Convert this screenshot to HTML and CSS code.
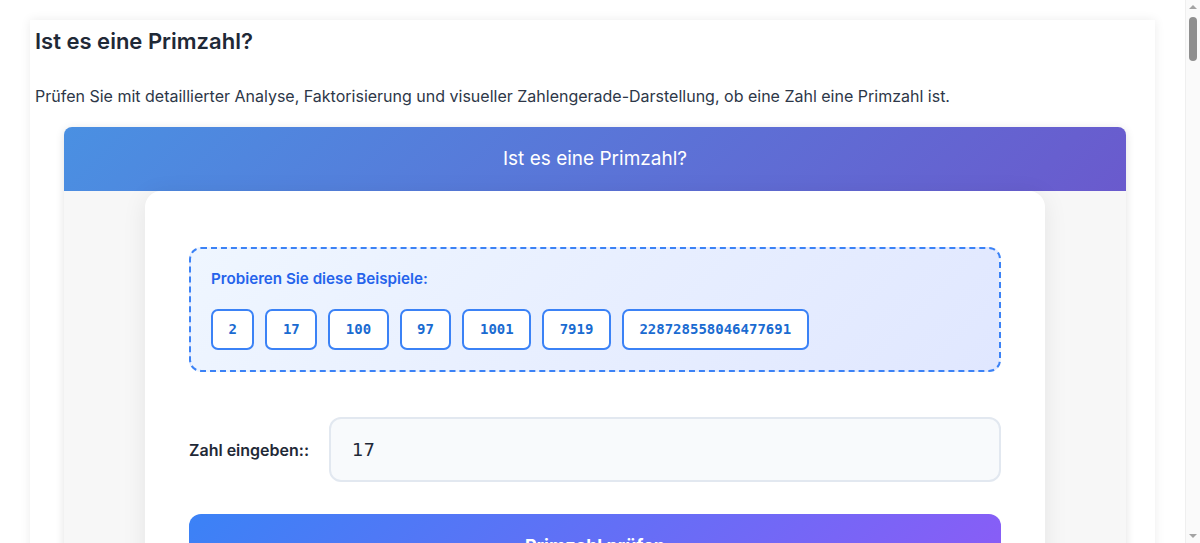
FILE: index.html
```html
<!DOCTYPE html>
<html lang="de">
<head>
<meta charset="utf-8">
<title>Ist es eine Primzahl?</title>
<link rel="stylesheet" href="styles.css">
</head>
<body>
<div class="scroller">
<main class="page-card">
  <h2 class="page-title">Ist es eine Primzahl?</h2>
  <p class="page-intro">Prüfen Sie mit detaillierter Analyse, Faktorisierung und visueller Zahlengerade-Darstellung, ob eine Zahl eine Primzahl ist.</p>

  <section class="widget">
    <header class="widget-head">Ist es eine Primzahl?</header>
    <div class="widget-body">
      <div class="calc-card">
        <div class="examples">
          <div class="examples-title">Probieren Sie diese Beispiele:</div>
          <div class="examples-list">
            <button class="ex-btn" type="button">2</button>
            <button class="ex-btn" type="button">17</button>
            <button class="ex-btn" type="button">100</button>
            <button class="ex-btn" type="button">97</button>
            <button class="ex-btn" type="button">1001</button>
            <button class="ex-btn" type="button">7919</button>
            <button class="ex-btn" type="button">228728558046477691</button>
          </div>
        </div>

        <div class="input-row">
          <label class="input-label" for="num">Zahl eingeben::</label>
          <input class="num-input" id="num" type="text" value="17">
        </div>

        <button class="check-btn" type="button">Primzahl prüfen</button>

        <div class="result">
          <h3 class="result-title">17 ist eine Primzahl</h3>
          <p class="result-text">17 hat genau zwei Teiler: 1 und 17. Damit erfüllt die Zahl die Definition einer Primzahl.</p>
        </div>
      </div>
    </div>
  </section>

  <article class="info">
    <h3>Was ist eine Primzahl?</h3>
    <p>Eine Primzahl ist eine natürliche Zahl größer als 1, die nur durch 1 und sich selbst teilbar ist. Die ersten Primzahlen sind 2, 3, 5, 7, 11, 13, 17, 19, 23 und 29.</p>
    <h3>Wie funktioniert die Prüfung?</h3>
    <p>Der Rechner testet, ob die eingegebene Zahl durch eine kleinere Zahl bis zu ihrer Quadratwurzel teilbar ist. Ist sie es nicht, handelt es sich um eine Primzahl.</p>
    <h3>Faktorisierung</h3>
    <p>Ist die Zahl keine Primzahl, wird sie in ihre Primfaktoren zerlegt, zum Beispiel 100 = 2 × 2 × 5 × 5.</p>
    <h3>Zahlengerade</h3>
    <p>Die Zahlengerade zeigt die nächstgelegenen Primzahlen unterhalb und oberhalb der eingegebenen Zahl.</p>
  </article>
</main>
</div>
<div class="fake-scrollbar" aria-hidden="true">
  <span class="sb-arrow sb-up"></span>
  <span class="sb-thumb"></span>
  <span class="sb-track"></span>
  <span class="sb-arrow sb-down"></span>
</div>
</body>
</html>
```

FILE: styles.css
```css
* { box-sizing: border-box; }

html, body {
  margin: 0;
  height: 100%;
  background: #ffffff;
  overflow: hidden;
}

body {
  font-family: "Inter", "Noto Sans", sans-serif;
  color: #1f2937;
}

.scroller {
  height: 100%;
  overflow-y: auto;
  padding: 20px 45px 40px 30px;
}

/* imitation of the browser's classic scrollbar */
.fake-scrollbar {
  position: fixed;
  top: 0;
  right: 0;
  width: 15px;
  height: 100%;
  background: #fafafa;
  border-left: 1px solid #efefef;
  display: flex;
  flex-direction: column;
  align-items: center;
}

.sb-arrow {
  width: 0;
  height: 0;
  border-left: 4px solid transparent;
  border-right: 4px solid transparent;
}

.sb-up {
  margin-top: 5px;
  border-bottom: 4px solid #a3a3a3;
}

.sb-down {
  margin-bottom: 5px;
  border-top: 4px solid #a3a3a3;
}

.sb-thumb {
  margin-top: 8px;
  width: 8px;
  height: 44px;
  border-radius: 4px;
  background: #8f8f8f;
}

.sb-track {
  flex: 1;
}

.page-card {
  background: #ffffff;
  box-shadow: 0 0 10px rgba(0, 0, 0, 0.08);
  padding: 8px 0 40px 5px;
}

.page-title {
  margin: 0;
  font-size: 22px;
  font-weight: 600;
  line-height: 27px;
  color: #1f2937;
}

.page-intro {
  margin: 29px 0 19px;
  font-size: 16px;
  line-height: 24px;
  color: #2d3748;
}

.widget {
  margin: 0 29px;
  border-radius: 8px;
  overflow: hidden;
  box-shadow: 0 2px 10px rgba(0, 0, 0, 0.12);
  background: #f7f7f7;
}

.widget-head {
  background: linear-gradient(135deg, #4a90e2 0%, #6a5acd 100%);
  color: #ffffff;
  text-align: center;
  font-size: 19px;
  line-height: 24px;
  padding: 20px;
}

.widget-body {
  padding: 0 20px 40px;
}

.calc-card {
  max-width: 900px;
  margin: 0 auto;
  background: #ffffff;
  border-radius: 16px;
  box-shadow: 0 4px 24px rgba(0, 0, 0, 0.08);
  padding: 56px 44px 40px;
}

.examples {
  border: 2px dashed #3b82f6;
  border-radius: 12px;
  background: linear-gradient(135deg, #eff6ff 0%, #e0e7ff 100%);
  padding: 20px;
  margin-bottom: 45px;
}

.examples-title {
  font-size: 15.2px;
  font-weight: 600;
  line-height: 20px;
  color: #2563eb;
  margin-bottom: 20px;
}

.examples-list {
  display: flex;
  flex-wrap: wrap;
  gap: 11px;
}

.ex-btn {
  font-family: "DejaVu Sans Mono", monospace;
  font-size: 14px;
  font-weight: 700;
  line-height: 17px;
  height: 41px;
  color: #1a6bd1;
  background: #ffffff;
  border: 2px solid #3b82f6;
  border-radius: 7px;
  padding: 0 15.5px;
}

.input-row {
  display: flex;
  align-items: center;
  gap: 20px;
  margin-bottom: 32px;
}

.input-label {
  font-size: 16px;
  font-weight: 600;
  color: #1f2937;
  white-space: nowrap;
}

.num-input {
  flex: 1;
  height: 65px;
  font-family: "DejaVu Sans", sans-serif;
  font-size: 18px;
  color: #1f2937;
  background: #f8fafc;
  border: 2px solid #e2e8f0;
  border-radius: 12px;
  padding: 0 21px;
  outline: none;
}

.check-btn {
  display: block;
  width: 100%;
  font-family: "Inter", sans-serif;
  font-size: 18px;
  font-weight: 700;
  color: #ffffff;
  background: linear-gradient(135deg, #3b82f6 0%, #8b5cf6 100%);
  border: none;
  border-radius: 12px;
  padding: 20px;
  line-height: 24px;
}

.result {
  margin-top: 32px;
  padding: 24px;
  border-radius: 12px;
  background: #ecfdf5;
  border: 2px solid #10b981;
}

.result-title {
  margin: 0 0 10px;
  font-size: 20px;
  color: #047857;
}

.result-text {
  margin: 0;
  line-height: 24px;
  color: #1f2937;
}

.info {
  margin: 40px 29px 0;
  line-height: 26px;
  color: #2d3748;
}

.info h3 {
  font-size: 20px;
  margin: 32px 0 12px;
  color: #1f2937;
}

.info p {
  margin: 0 0 16px;
  padding-bottom: 1200px;
}
```
